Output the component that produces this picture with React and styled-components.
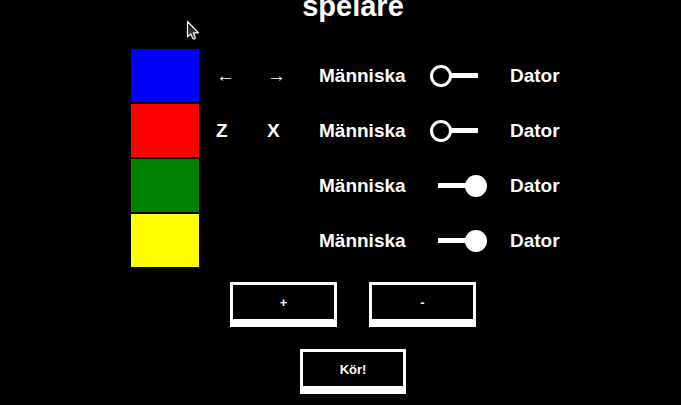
import React, { useState } from "react";
import styled, { createGlobalStyle } from "styled-components";

const GlobalStyle = createGlobalStyle`
  * { box-sizing: border-box; }
  body {
    margin: 0;
    background: #000;
    color: #fff;
    font-family: "Liberation Sans", Arial, sans-serif;
    font-weight: bold;
    overflow: hidden;
  }
`;

const Page = styled.main`
  display: flex;
  flex-direction: column;
  align-items: center;
  padding-left: 25px;
`;

const Title = styled.h1`
  margin: -11px 0 24px;
  font-size: 29px;
  line-height: 34px;
`;

const PlayerTable = styled.table`
  border-spacing: 0 2px;
  margin-left: -14px;
`;

const Cell = styled.td`
  width: ${(p) => p.$width}px;
  height: 53px;
  padding: 0 0 0 ${(p) => p.$indent || 0}px;
  font-size: 19px;
  line-height: 22px;
  white-space: nowrap;
`;

const KeyCell = styled(Cell)`
  font-weight: ${(p) => (p.$arrow ? "normal" : "bold")};
`;

const Swatch = styled(Cell)`
  background: ${(p) => p.$color};
`;

const Slider = styled.input`
  appearance: none;
  display: block;
  width: 57px;
  height: 22px;
  margin: 0;
  background: linear-gradient(#fff, #fff) 8px center / 40px 5px no-repeat;
  cursor: pointer;

  &::-webkit-slider-thumb {
    appearance: none;
    width: 22px;
    height: 22px;
    border: 3px solid #fff;
    border-radius: 50%;
    background: ${(p) => (p.$on ? "#fff" : "#000")};
  }
`;

const Actions = styled.div`
  display: flex;
  gap: 32px;
  margin-top: ${(p) => p.$top}px;
`;

const Button = styled.button`
  width: ${(p) => p.$width || 107}px;
  height: 45px;
  padding: 0;
  border: 3px solid #fff;
  border-bottom-width: 8px;
  background: #000;
  color: #fff;
  font: bold 13px "Liberation Sans", Arial, sans-serif;
  cursor: pointer;
`;

const Pointer = styled.svg`
  position: absolute;
  left: 186px;
  top: 20px;
  pointer-events: none;
`;

const players = [
  { color: "#00f", left: "←", right: "→", arrows: true, computer: 0 },
  { color: "#f00", left: "Z", right: "X", computer: 0 },
  { color: "#008000", left: "", right: "", computer: 1 },
  { color: "#ff0", left: "", right: "", computer: 1 },
];

function Player({ player }) {
  const [value, setValue] = useState(player.computer);
  return (
    <tr>
      <Swatch $width={68} $color={player.color} />
      <KeyCell $width={68} $indent={17} $arrow={player.arrows}>{player.left}</KeyCell>
      <KeyCell $width={52} $arrow={player.arrows}>{player.right}</KeyCell>
      <Cell $width={111}>Människa</Cell>
      <Cell $width={80}>
        <Slider
          type="range"
          min="0"
          max="1"
          value={value}
          $on={value === 1}
          aria-label="Människa eller dator"
          onChange={(e) => setValue(Number(e.target.value))}
        />
      </Cell>
      <Cell $width={51}>Dator</Cell>
    </tr>
  );
}

export default function App() {
  return (
    <Page>
      <GlobalStyle />
      <Title>spelare</Title>
      <PlayerTable>
        <tbody>
          {players.map((player) => (
            <Player key={player.color} player={player} />
          ))}
        </tbody>
      </PlayerTable>
      <Actions $top={13}>
        <Button type="button">+</Button>
        <Button type="button">-</Button>
      </Actions>
      <Actions $top={22}>
        <Button type="button" $width={106}>Kör!</Button>
      </Actions>
      <Pointer width="14" height="21" viewBox="0 0 14 21" aria-hidden="true">
        <defs>
          <linearGradient id="pointer-fill" x1="0" y1="0" x2="0" y2="1">
            <stop offset="0" stopColor="#111" />
            <stop offset="1" stopColor="#484848" />
          </linearGradient>
        </defs>
        <path
          d="M1.5 1.5V16.9l3.3-3 1.8 4.2q.6 1.2 1.8.8t.8-1.8L7.5 12.8h5Z"
          fill="url(#pointer-fill)"
          stroke="#fff"
          strokeWidth="1.2"
          strokeLinejoin="round"
        />
      </Pointer>
    </Page>
  );
}
